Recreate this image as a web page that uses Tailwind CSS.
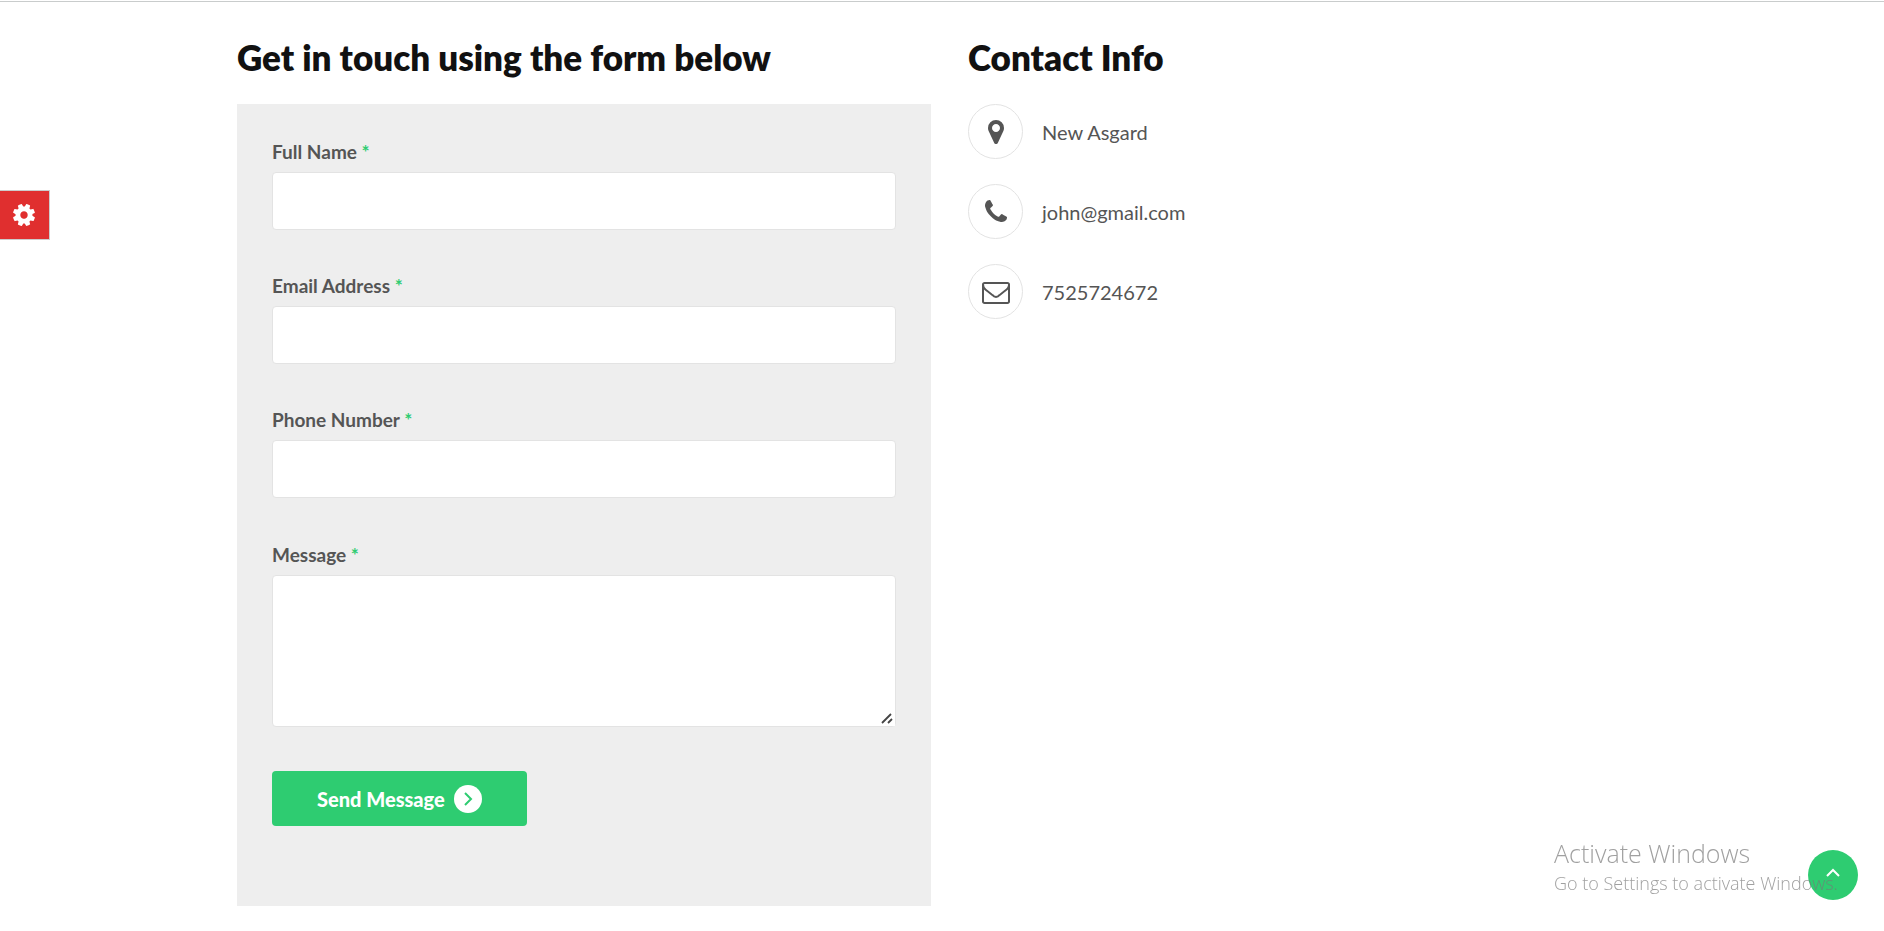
<!DOCTYPE html>
<html lang="en">
<head>
    <meta charset="UTF-8">
    <meta name="viewport" content="width=device-width, initial-scale=1.0">
    <title>Contact</title>
    <script src="https://cdn.jsdelivr.net/npm/@tailwindcss/browser@4"></script>
</head>
<body class="bg-white font-['Lato',sans-serif] text-[#555] border-t border-white">
    <main class="border-t border-[#c9cccc] pt-[35px] pb-6">
        <div class="mx-auto max-w-[1410px] grid grid-cols-[694fr_679fr] gap-[37px]">
            <section>
                <h2 class="text-[35px] leading-10 font-extrabold text-[#111] mb-[27px]">Get in touch using the form below</h2>
                <form class="bg-[#eee] px-[35px] pt-9 pb-20">
                    <div class="mb-11">
                        <label for="fullName" class="block text-[19px] leading-6 font-bold mb-2">Full Name <span class="text-[#2ecc71]">*</span></label>
                        <input type="text" id="fullName" class="block w-full h-[58px] px-4 bg-white border border-[#e3e3e3] rounded">
                    </div>
                    <div class="mb-11">
                        <label for="email" class="block text-[19px] leading-6 font-bold mb-2">Email Address <span class="text-[#2ecc71]">*</span></label>
                        <input type="email" id="email" class="block w-full h-[58px] px-4 bg-white border border-[#e3e3e3] rounded">
                    </div>
                    <div class="mb-[45px]">
                        <label for="phone" class="block text-[19px] leading-6 font-bold mb-2">Phone Number <span class="text-[#2ecc71]">*</span></label>
                        <input type="tel" id="phone" class="block w-full h-[58px] px-4 bg-white border border-[#e3e3e3] rounded">
                    </div>
                    <div class="mb-11">
                        <label for="message" class="block text-[19px] leading-6 font-bold mb-2">Message <span class="text-[#2ecc71]">*</span></label>
                        <div class="relative">
                            <textarea id="message" class="block w-full h-[152px] px-4 py-3 bg-white border border-[#e3e3e3] rounded resize-y"></textarea>
                            <svg class="absolute right-px bottom-px size-4 bg-white pointer-events-none" viewBox="0 0 16 16" fill="none" stroke="#444" stroke-width="1.8"><path d="M3 13l9-9M9 13l4-4"/></svg>
                        </div>
                    </div>
                    <button type="submit" class="flex items-center gap-[9px] h-[55px] px-[45px] rounded bg-[#2ecc71] text-white text-xl font-black">
                        Send Message
                        <span class="flex items-center justify-center size-7 rounded-full bg-white text-[#2ecc71]">
                            <svg class="size-4" viewBox="0 0 16 16" fill="none" stroke="currentColor" stroke-width="2"><path d="M5 2l6 6-6 6"/></svg>
                        </span>
                    </button>
                </form>
            </section>

            <section>
                <h2 class="text-[35px] leading-10 font-extrabold text-[#111] mb-[27px]">Contact Info</h2>
                <ul class="space-y-[25px] text-xl">
                    <li class="flex items-center gap-[19px]">
                        <span class="flex items-center justify-center size-[55px] rounded-full border border-[#e3e3e3]">
                            <svg class="h-7 w-4" viewBox="0 0 1024 1792" fill="currentColor"><path d="M768 640q0-106-75-181t-181-75-181 75-75 181 75 181 181 75 181-75 75-181zm256 0q0 109-33 179l-364 774q-16 33-47.500 52t-67.500 19-67.500-19-46.500-52l-365-774q-33-70-33-179 0-212 150-362t362-150 362 150 150 362z"/></svg>
                        </span>
                        New Asgard
                    </li>
                    <li class="flex items-center gap-[19px]">
                        <span class="flex items-center justify-center size-[55px] rounded-full border border-[#e3e3e3]">
                            <svg class="size-7" viewBox="0 0 1792 1792" fill="currentColor"><path d="M1600 1240q0 27-10 70.500t-21 68.500q-21 50-122 106-94 51-186 51-27 0-53-3.500t-57.500-12.500-47-14.500-55.500-20.500-49-18q-98-35-175-83-127-79-264-216t-216-264q-48-77-83-175-3-9-18-49t-20.500-55.500-14.500-47-12.500-57.500-3.500-53q0-92 51-186 56-101 106-122 25-11 68.500-21t70.500-10q14 0 21 3 18 6 53 76 11 19 30 54t35 63.500 31 53.500q3 4 17.500 25t21.500 35.500 7 28.500q0 20-28.500 50t-62 55-62 53-28.500 46q0 9 5 22.500t8.500 20.500 14 24 11.500 19q76 137 174 235t235 174q2 1 19 11.500t24 14 20.500 8.500 22.500 5q18 0 46-28.500t53-62 55-62 50-28.500q14 0 28.500 7t35.500 21.500 25 17.500q25 15 53.500 31t63.500 35 54 30q70 35 76 53 3 7 3 21z"/></svg>
                        </span>
                        john@gmail.com
                    </li>
                    <li class="flex items-center gap-[19px]">
                        <span class="flex items-center justify-center size-[55px] rounded-full border border-[#e3e3e3]">
                            <svg class="size-7" viewBox="0 0 1792 1792" fill="currentColor"><path d="M1664 1504v-768q-32 36-69 66-268 206-426 338-51 43-83 67t-86.500 48.500-102.500 24.500h-2q-48 0-102.500-24.500t-86.500-48.500-83-67q-158-132-426-338-37-30-69-66v768q0 13 9.500 22.500t22.500 9.500h1472q13 0 22.500-9.500t9.500-22.500zm0-1051v-24.500l-.5-13-3-12.500-5.500-9-9-7.500-14-2.500h-1472q-13 0-22.500 9.500t-9.500 22.500q0 168 147 284 193 152 401 317 6 5 35 29.500t46 37.500 44.500 31.500 50.500 27.500 43 9h2q20 0 43-9t50.500-27.500 44.500-31.500 46-37.500 35-29.500q208-165 401-317 54-43 100.500-115.500t46.500-131.500zm128-37v1088q0 66-47 113t-113 47h-1472q-66 0-113-47t-47-113v-1088q0-66 47-113t113-47h1472q66 0 113 47t47 113z"/></svg>
                        </span>
                        7525724672
                    </li>
                </ul>
            </section>
        </div>
    </main>

    <!-- Style switcher toggle -->
    <button type="button" aria-label="Settings" class="fixed left-0 top-[190px] flex items-center justify-center w-[50px] h-[50px] pr-px bg-[#e02f2f] text-white border border-l-0 border-[#ccc]">
        <svg class="size-[26px]" viewBox="0 0 1792 1792" fill="currentColor"><path transform="rotate(22.5 896 896)" d="M1152 896q0-106-75-181t-181-75-181 75-75 181 75 181 181 75 181-75 75-181zm512-109v222q0 12-8 23t-20 13l-185 28q-19 54-39 91 35 50 107 138 10 12 10 25t-9 23q-27 37-99 108t-94 71q-12 0-26-9l-138-108q-44 23-91 38-16 136-29 186-7 28-36 28h-222q-14 0-24.500-8.500t-11.500-21.500l-28-184q-49-16-90-37l-141 107q-10 9-25 9-14 0-25-11-126-114-165-168-7-10-7-23 0-12 8-23 15-21 51-66.500t54-70.500q-27-50-41-99l-183-27q-13-2-21-12.500t-8-23.500v-222q0-12 8-23t19-13l186-28q14-46 39-92-40-57-107-138-10-12-10-24 0-10 9-23 26-36 98.500-107.500t94.500-71.500q13 0 26 10l138 107q44-23 91-38 16-136 29-186 7-28 36-28h222q14 0 24.500 8.500t11.500 21.500l28 184q49 16 90 37l142-107q9-9 24-9 13 0 25 10 129 119 165 170 7 8 7 22 0 12-8 23-15 21-51 66.500t-54 70.500q26 50 41 98l183 28q13 2 21 12.500t8 23.500z"/></svg>
    </button>

    <!-- Back to top -->
    <a href="#" aria-label="Back to top" class="fixed right-[26px] bottom-[31px] flex items-center justify-center size-[50px] rounded-full bg-[#2ecc71] text-white">
        <svg class="size-4" viewBox="0 0 16 16" fill="none" stroke="currentColor" stroke-width="2"><path d="M2 9l6-6 6 6"/></svg>
    </a>

    <div class="fixed right-[46px] bottom-9 w-[284px] whitespace-nowrap pointer-events-none font-['Open_Sans',sans-serif] font-light text-[#777]/70">
        <p class="text-[25px] leading-8 mb-0.5">Activate Windows</p>
        <p class="text-lg leading-6">Go to Settings to activate Windows.</p>
    </div>
</body>
</html>
